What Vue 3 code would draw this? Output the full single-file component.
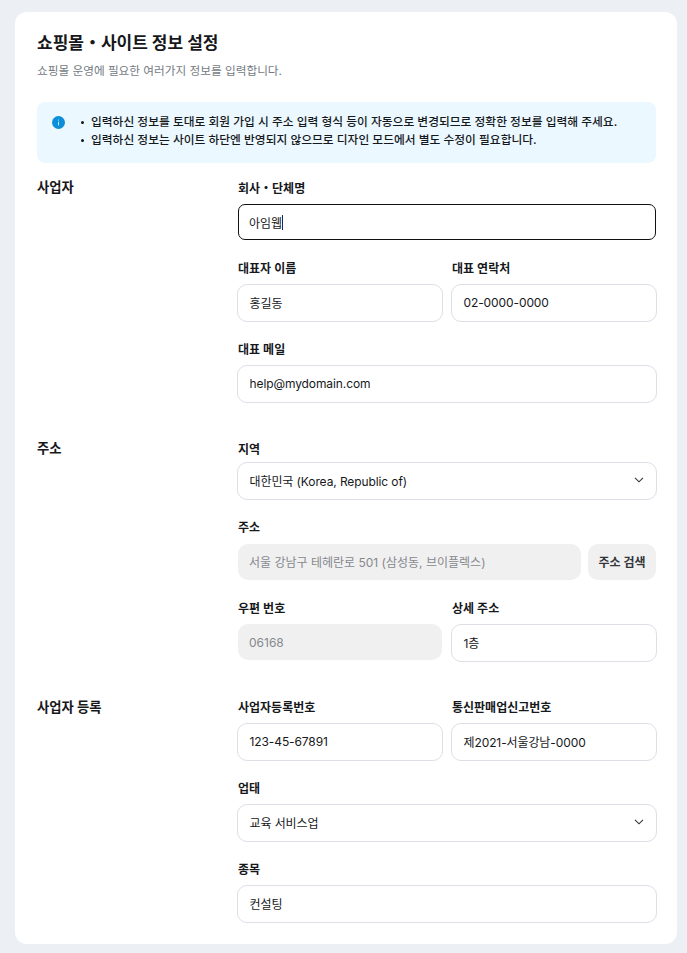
<script setup>
const noticeLines = [
  '입력하신 정보를 토대로 회원 가입 시 주소 입력 형식 등이 자동으로 변경되므로 정확한 정보를 입력해 주세요.',
  '입력하신 정보는 사이트 하단엔 반영되지 않으므로 디자인 모드에서 별도 수정이 필요합니다.'
]
</script>

<template>
  <div class="page">
    <div class="card">
      <h1 class="title">쇼핑몰・사이트 정보 설정</h1>
      <p class="desc">쇼핑몰 운영에 필요한 여러가지 정보를 입력합니다.</p>

      <div class="notice">
        <svg class="notice-icon" width="13" height="13" viewBox="0 0 14 14">
          <circle cx="7" cy="7" r="7" fill="#0a8fd8" />
          <rect x="6.5" y="6.2" width="1" height="4" fill="#cfeaf9" />
          <rect x="6.5" y="3.9" width="1" height="1.1" fill="#cfeaf9" />
        </svg>
        <ul class="notice-list">
          <li v-for="line in noticeLines" :key="line">{{ line }}</li>
        </ul>
      </div>

      <section class="section">
        <h2 class="section-title">사업자</h2>
        <div class="fields">
          <div class="field">
            <label>회사・단체명</label>
            <div class="input focused">아임웹<span class="caret"></span></div>
          </div>
          <div class="row">
            <div class="field">
              <label>대표자 이름</label>
              <div class="input">홍길동</div>
            </div>
            <div class="field">
              <label>대표 연락처</label>
              <div class="input">02-0000-0000</div>
            </div>
          </div>
          <div class="field">
            <label>대표 메일</label>
            <div class="input">help@mydomain.com</div>
          </div>
        </div>
      </section>

      <section class="section">
        <h2 class="section-title">주소</h2>
        <div class="fields">
          <div class="field">
            <label class="tight">지역</label>
            <div class="input select">
              대한민국 (Korea, Republic of)
              <svg width="10" height="6" viewBox="0 0 10 6" fill="none">
                <path d="M1 .8l4 4 4-4" stroke="#333" stroke-width="1.1" />
              </svg>
            </div>
          </div>
          <div class="field">
            <label>주소</label>
            <div class="address">
              <div class="input disabled">서울 강남구 테헤란로 501 (삼성동, 브이플렉스)</div>
              <button class="btn-search" type="button">주소 검색</button>
            </div>
          </div>
          <div class="row">
            <div class="field">
              <label>우편 번호</label>
              <div class="input disabled">06168</div>
            </div>
            <div class="field">
              <label>상세 주소</label>
              <div class="input">1층</div>
            </div>
          </div>
        </div>
      </section>

      <section class="section last">
        <h2 class="section-title">사업자 등록</h2>
        <div class="fields">
          <div class="row">
            <div class="field">
              <label>사업자등록번호</label>
              <div class="input">123-45-67891</div>
            </div>
            <div class="field">
              <label>통신판매업신고번호</label>
              <div class="input">제2021-서울강남-0000</div>
            </div>
          </div>
          <div class="field">
            <label>업태</label>
            <div class="input select">
              교육 서비스업
              <svg width="10" height="6" viewBox="0 0 10 6" fill="none">
                <path d="M1 .8l4 4 4-4" stroke="#333" stroke-width="1.1" />
              </svg>
            </div>
          </div>
          <div class="field">
            <label>종목</label>
            <div class="input">컨설팅</div>
          </div>
        </div>
      </section>
    </div>
  </div>
</template>

<style>
html, body {
  margin: 0;
  background: #ecf0f5;
}
</style>

<style scoped>
.page {
  padding: 12px 10px 9px 15px;
  font-family: Inter, "Noto Sans CJK KR", sans-serif;
  color: #16181b;
}

.card {
  background: #fff;
  border-radius: 12px;
  padding: 21px 20px 21px 22px;
}

.title {
  margin: 0;
  font-size: 17px;
  line-height: 20px;
  font-weight: 700;
}

.desc {
  margin: 9px 0 0;
  font-size: 11.67px;
  line-height: 18px;
  color: #757b83;
}

.notice {
  display: flex;
  gap: 15px;
  margin: 22px 1px 0 0;
  padding: 11px 15px 14px 15px;
  background: #ebf8ff;
  border-radius: 8px;
}

.notice-icon {
  flex: none;
  margin-top: 3px;
}

.notice-list {
  margin: 0;
  padding: 0 0 0 1px;
  list-style: none;
  font-size: 11.75px;
  line-height: 18px;
  font-weight: 500;
}

.notice-list li {
  display: flex;
  align-items: center;
  gap: 7px;
}

.notice-list li::before {
  content: "";
  flex: none;
  width: 3px;
  height: 3px;
  border-radius: 50%;
  background: #16181b;
}

.section {
  display: flex;
  margin-top: 37px;
}

.notice + .section {
  margin-top: 16px;
}

.section.last {
  margin-top: 36px;
}

.section-title {
  flex: none;
  width: 200px;
  margin: -1px 0 0;
  font-size: 13.33px;
  line-height: 18px;
  font-weight: 700;
}

.section.last .section-title {
  margin-top: 0;
}

.fields {
  flex: 1;
  min-width: 0;
  display: flex;
  flex-direction: column;
  gap: 18px;
}

.row {
  display: flex;
  gap: 8px;
}

.row .field {
  flex: 1;
  min-width: 0;
}

.field label {
  display: block;
  margin-bottom: 6px;
  padding: 1px 0 0 1px;
  font-size: 12px;
  line-height: 18px;
  font-weight: 600;
}

.field label.tight {
  margin-bottom: 3px;
}

.input {
  display: flex;
  align-items: center;
  box-sizing: border-box;
  height: 38px;
  padding: 0 12px 2px 11.5px;
  border: 1px solid #dcdfe5;
  border-radius: 10px;
  font-size: 12px;
  letter-spacing: -0.1px;
  background: #fff;
}

.focused {
  height: 36px;
  margin: 1px;
  padding: 0 10px;
  border-color: #111;
  border-radius: 7px;
}

.caret {
  width: 1px;
  height: 15px;
  background: #1a2a4a;
}

.select {
  justify-content: space-between;
}

.disabled {
  height: 36px;
  margin: 1px;
  padding: 0 11px;
  border: none;
  background: #f0f0f0;
  color: #85888d;
  letter-spacing: 0;
}

.address {
  display: flex;
  gap: 6px;
}

.address .input {
  flex: 1;
  padding-bottom: 1px;
}

.btn-search {
  flex: none;
  width: 68px;
  height: 36px;
  margin: 1px 1px 1px 0;
  padding: 0 0 1px;
  border: none;
  border-radius: 10px;
  background: #f0f0f0;
  color: #33363a;
  font: 600 12px Inter, "Noto Sans CJK KR", sans-serif;
  cursor: pointer;
}
</style>
